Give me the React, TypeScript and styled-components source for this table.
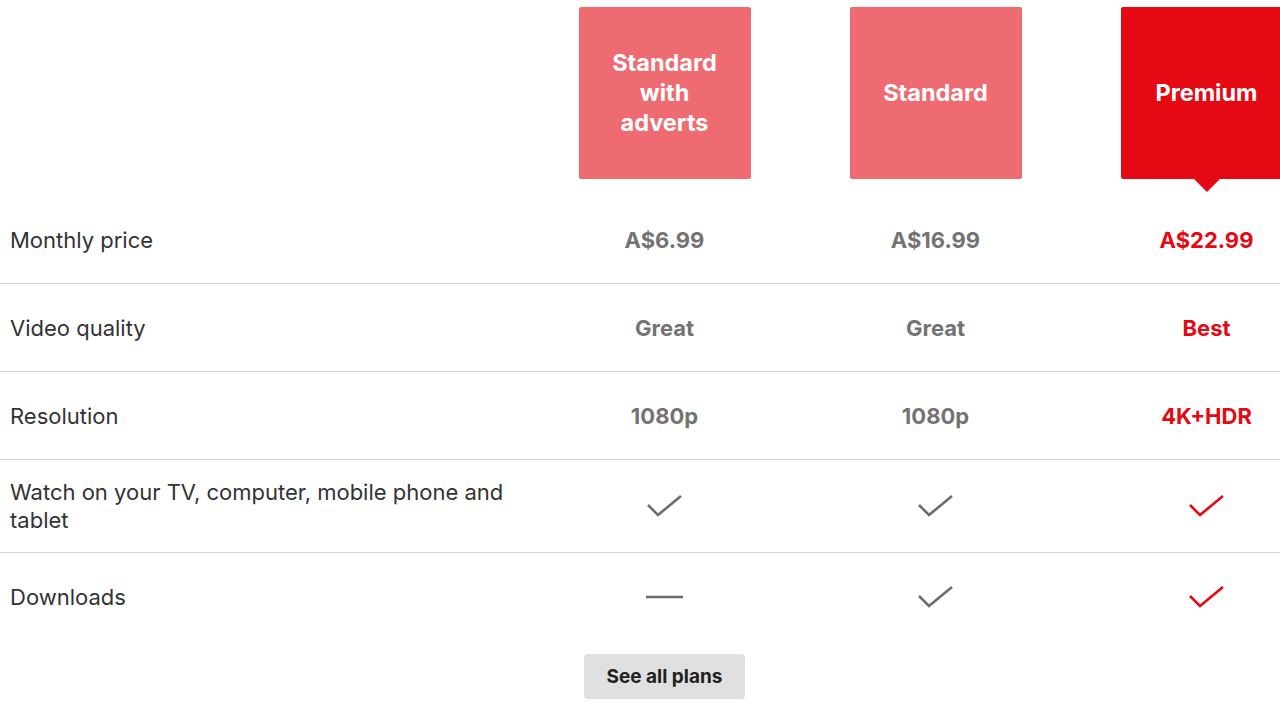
import React from "react";
import styled, { createGlobalStyle } from "styled-components";

const Global = createGlobalStyle`
  html, body { margin: 0; padding: 0; background: #fff; overflow: hidden; }
  body { font-family: Inter, "Noto Sans", Arial, sans-serif; }
`;

const Page = styled.div`
  width: 1342px;
`;

const Grid = styled.div`
  display: grid;
  grid-template-columns: 529px repeat(3, 271px);
`;

const HeaderCell = styled.div`
  height: 196px;
  display: flex;
  justify-content: center;
  align-items: flex-start;
  padding-top: 7px;
  box-sizing: border-box;
`;

const PlanBox = styled.div<{ $active?: boolean }>`
  position: relative;
  width: 172px;
  height: 172px;
  border-radius: 2px;
  background: ${(p) => (p.$active ? "#e50914" : "rgb(239,107,114)")};
  color: #fff;
  font-weight: 700;
  font-size: 23.5px;
  line-height: 30px;
  display: flex;
  align-items: center;
  justify-content: center;
  text-align: center;
  padding: 0 22px;
  box-sizing: border-box;
  ${(p) =>
    p.$active &&
    `&::after {
      content: "";
      position: absolute;
      left: 50%;
      bottom: -13px;
      margin-left: -13px;
      border-left: 13px solid transparent;
      border-right: 13px solid transparent;
      border-top: 13px solid #e50914;
    }`}
`;

const Cell = styled.div<{ $last?: boolean }>`
  min-height: 88px;
  padding: 18px 0;
  box-sizing: border-box;
  display: flex;
  align-items: center;
  border-bottom: ${(p) => (p.$last ? "none" : "1px solid #d2d2d2")};
`;

const Label = styled(Cell)`
  padding-left: 10px;
  padding-right: 20px;
  font-size: 22px;
  line-height: 28px;
  color: #333;
`;

const Value = styled(Cell)<{ $red?: boolean }>`
  justify-content: center;
  font-size: 22px;
  font-weight: 700;
  line-height: 28px;
  color: ${(p) => (p.$red ? "#e50914" : "#737373")};
`;

const Footer = styled.div`
  display: grid;
  grid-template-columns: 529px 271px;
  padding-top: 13px;
`;

const FooterSlot = styled.div`
  grid-column: 2;
  display: flex;
  justify-content: center;
`;

const Button = styled.button`
  width: 161px;
  height: 45px;
  border: none;
  border-radius: 4px;
  background: #e0e0e0;
  color: #221f1f;
  font-family: inherit;
  font-weight: 700;
  font-size: 19px;
  cursor: pointer;
`;

const Check = ({ red }: { red?: boolean }) => (
  <svg width="40" height="30" viewBox="0 0 40 30">
    <path
      d="M3 14 L13 24 L36 5"
      fill="none"
      stroke={red ? "#e50914" : "#6d6d6e"}
      strokeWidth="2.6"
    />
  </svg>
);

const Dash = () => (
  <svg width="40" height="30" viewBox="0 0 40 30">
    <path d="M1 15 H38" stroke="#6d6d6e" strokeWidth="2.6" />
  </svg>
);

type V = React.ReactNode;
const rows: { label: string; values: V[] }[] = [
  { label: "Monthly price", values: ["A$6.99", "A$16.99", "A$22.99"] },
  { label: "Video quality", values: ["Great", "Great", "Best"] },
  { label: "Resolution", values: ["1080p", "1080p", "4K+HDR"] },
  {
    label: "Watch on your TV, computer, mobile phone and tablet",
    values: [<Check />, <Check />, <Check red />],
  },
  { label: "Downloads", values: [<Dash />, <Check />, <Check red />] },
];

export default function App() {
  return (
    <Page>
      <Global />
      <Grid>
        <HeaderCell />
        <HeaderCell>
          <PlanBox>Standard with adverts</PlanBox>
        </HeaderCell>
        <HeaderCell>
          <PlanBox>Standard</PlanBox>
        </HeaderCell>
        <HeaderCell>
          <PlanBox $active>Premium</PlanBox>
        </HeaderCell>
        {rows.map((r, i) => {
          const last = i === rows.length - 1;
          return (
            <React.Fragment key={r.label}>
              <Label $last={last}>{r.label}</Label>
              {r.values.map((v, j) => (
                <Value key={j} $last={last} $red={j === 2}>
                  {v}
                </Value>
              ))}
            </React.Fragment>
          );
        })}
      </Grid>
      <Footer>
        <FooterSlot>
          <Button>See all plans</Button>
        </FooterSlot>
      </Footer>
    </Page>
  );
}
